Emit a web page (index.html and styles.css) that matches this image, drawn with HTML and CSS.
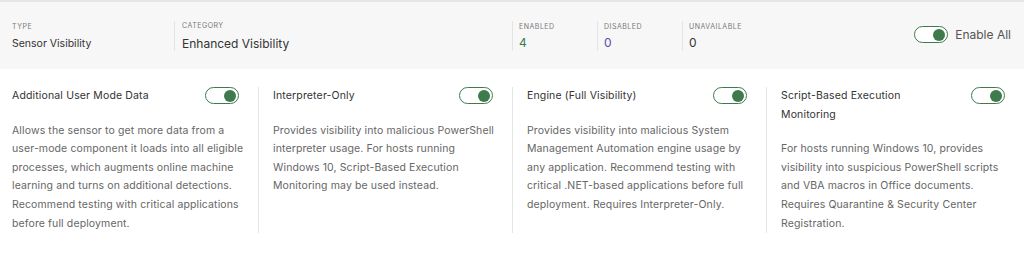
FILE: index.html
```html
<!DOCTYPE html>
<html lang="en">
<head>
    <meta charset="UTF-8">
    <title>Sensor Visibility</title>
    <link rel="stylesheet" href="styles.css">
</head>
<body>

    <!-- Summary bar -->
    <div class="summary">
        <div class="field field-type">
            <div class="label">Type</div>
            <div class="value">Sensor Visibility</div>
        </div>
        <div class="field field-category">
            <div class="label">Category</div>
            <div class="value value-large">Enhanced Visibility</div>
        </div>
        <div class="field field-stat">
            <div class="label">Enabled</div>
            <div class="value count count-enabled">4</div>
        </div>
        <div class="field field-stat">
            <div class="label">Disabled</div>
            <div class="value count count-disabled">0</div>
        </div>
        <div class="field field-stat">
            <div class="label">Unavailable</div>
            <div class="value count">0</div>
        </div>
        <label class="enable-all">
            <span class="toggle on"><span class="knob"></span></span>
            <span>Enable All</span>
        </label>
    </div>

    <!-- Settings -->
    <div class="cards">
        <div class="card">
            <div class="card-head">
                <div class="card-title">Additional User Mode Data</div>
                <span class="toggle on"><span class="knob"></span></span>
            </div>
            <p class="card-text">Allows the sensor to get more data from a user-mode component it loads into all eligible processes, which augments online machine learning and turns on additional detections. Recommend testing with critical applications before full deployment.</p>
        </div>
        <div class="card">
            <div class="card-head">
                <div class="card-title">Interpreter-Only</div>
                <span class="toggle on"><span class="knob"></span></span>
            </div>
            <p class="card-text">Provides visibility into malicious PowerShell interpreter usage. For hosts running Windows 10, Script-Based Execution Monitoring may be used instead.</p>
        </div>
        <div class="card">
            <div class="card-head">
                <div class="card-title">Engine (Full Visibility)</div>
                <span class="toggle on"><span class="knob"></span></span>
            </div>
            <p class="card-text">Provides visibility into malicious System Management Automation engine usage by any application. Recommend testing with critical .NET-based applications before full deployment. Requires Interpreter-Only.</p>
        </div>
        <div class="card">
            <div class="card-head">
                <div class="card-title">Script-Based Execution Monitoring</div>
                <span class="toggle on"><span class="knob"></span></span>
            </div>
            <p class="card-text">For hosts running Windows 10, provides visibility into suspicious PowerShell scripts and VBA macros in Office documents. Requires Quarantine &amp; Security Center Registration.</p>
        </div>
    </div>

</body>
</html>
```

FILE: styles.css
```css
/* Page */
body {
    font-family: Inter, "Noto Sans", sans-serif;
    margin: 0;
    padding: 0;
    background-color: #fff;
    color: #333;
}

/* Summary bar */
.summary {
    display: flex;
    align-items: center;
    height: 67px;
    background-color: #f7f7f7;
    border-top: 2px solid #e6e6e6;
    padding: 0 13px 0 12px;
}

.field {
    display: flex;
    flex-direction: column;
    gap: 6px;
    height: 30px;
    justify-content: center;
}

.field-type {
    width: 162px;
}

.field-category {
    width: 330px;
    border-left: 1px solid #e4e4e4;
    padding-left: 7px;
}

.field-stat {
    width: 78px;
    border-left: 1px solid #e4e4e4;
    padding-left: 6px;
}

.label {
    font-size: 7px;
    letter-spacing: 0.5px;
    text-transform: uppercase;
    color: #777;
}

.value {
    font-size: 10.5px;
    color: #333;
}

.value-large {
    font-size: 12px;
}

.count {
    font-size: 12px;
    line-height: 12px;
}

.count-enabled {
    color: #3e7a4c;
}

.count-disabled {
    color: #5a4aa8;
}

.enable-all {
    margin-left: auto;
    display: flex;
    align-items: center;
    gap: 7px;
    font-size: 12px;
    color: #555;
    margin-top: -2px;
}

/* Toggle switch */
.toggle {
    display: inline-flex;
    align-items: center;
    justify-content: flex-end;
    box-sizing: border-box;
    width: 34px;
    height: 17px;
    border: 1px solid #3e7a4c;
    border-radius: 9px;
    background-color: #fff;
    padding: 0 2px;
    flex-shrink: 0;
}

.knob {
    width: 12px;
    height: 12px;
    border-radius: 50%;
    background-color: #3e7a4c;
}

/* Cards */
.cards {
    display: grid;
    grid-template-columns: 258px 254px 254px 1fr;
    padding-top: 18px;
}

.card {
    padding: 0 12px 0 14px;
    border-left: 1px solid #e4e4e4;
}

.card:first-child {
    border-left: none;
    padding-left: 12px;
}

.card-head {
    display: flex;
    align-items: flex-start;
    justify-content: space-between;
    gap: 20px;
    padding-right: 7px;
}

.card-title {
    font-size: 10.5px;
    line-height: 18.6px;
    letter-spacing: 0.15px;
    color: #333;
    max-width: 150px;
}

.card-text {
    margin: 16px 0 0;
    font-size: 10.5px;
    line-height: 18.6px;
    letter-spacing: 0.12px;
    color: #666;
}
```
